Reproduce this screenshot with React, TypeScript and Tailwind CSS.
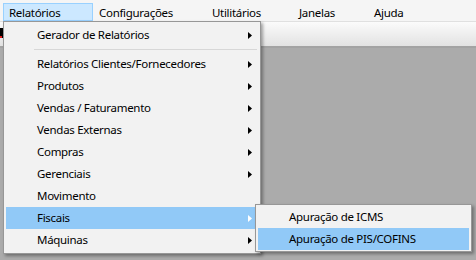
import React from "react";

// Windows-style menu bar with an open "Relatórios" dropdown and "Fiscais" submenu.

const FONT = { fontFamily: '"Noto Sans", "Segoe UI", sans-serif' };

const BAR_ITEMS = [
    { label: "Relatórios", w: "w-[90px]", active: true },
    { label: "Configurações", w: "w-[113px]" },
    { label: "Utilitários", w: "w-[87px]" },
    { label: "Janelas", w: "w-[75px]" },
    { label: "Ajuda", w: "w-[60px]" },
];

type Item = { label: string; sub?: boolean; active?: boolean; sep?: boolean };

const MENU: Item[] = [
    { label: "Gerador de Relatórios", sub: true },
    { label: "", sep: true },
    { label: "Relatórios Clientes/Fornecedores", sub: true },
    { label: "Produtos", sub: true },
    { label: "Vendas / Faturamento", sub: true },
    { label: "Vendas Externas", sub: true },
    { label: "Compras", sub: true },
    { label: "Gerenciais", sub: true },
    { label: "Movimento" },
    { label: "Fiscais", sub: true, active: true },
    { label: "Máquinas", sub: true },
];

const SUBMENU: Item[] = [
    { label: "Apuração de ICMS" },
    { label: "Apuração de PIS/COFINS", active: true },
];

function Arrow({ white }: { white?: boolean }) {
    return (
        <svg width="4" height="7" viewBox="0 0 4 7" className="shrink-0">
            <path d="M0 0 L4 3.5 L0 7 Z" fill={white ? "#ffffff" : "#000000"} />
        </svg>
    );
}

function MenuRow({ item }: { item: Item }) {
    if (item.sep) {
        return (
            <div className="h-[7px] flex items-center pl-[28px] pr-[1px]">
                <div className="h-px w-full bg-[#d7d7d7]" />
            </div>
        );
    }
    return (
        <div
            className={[
                "h-[22px] flex items-center pl-[31px] pr-[6px] text-[11.5px] tracking-[-0.3px] text-black",
                item.active ? "bg-[#91c9f7]" : "",
            ].join(" ")}
        >
            <span className="flex-1 leading-[22px] whitespace-nowrap">{item.label}</span>
            {item.sub && <Arrow white={item.active} />}
        </div>
    );
}

export default function App() {
    return (
        <div className="relative w-[476px] h-[260px] overflow-hidden bg-[#ababab]" style={FONT}>
            {/* Menu bar */}
            <div className="h-[22px] bg-[#f5f5f5] flex items-start pl-[3px] pt-[3px] border-b border-[#e0e0e0]">
                {BAR_ITEMS.map((b) => (
                    <div
                        key={b.label}
                        className={[
                            b.w,
                            "h-[18px] pl-[5px] text-[11.5px] tracking-[-0.3px] leading-[17px] text-black whitespace-nowrap border",
                            b.active ? "bg-[#cce8ff] border-[#99d1ff]" : "border-transparent",
                        ].join(" ")}
                    >
                        {b.label}
                    </div>
                ))}
            </div>

            {/* Toolbar */}
            <div className="h-[26px] bg-gradient-to-b from-[#fbfbfb] to-[#e2e2e2] border-b-2 border-[#a3a3a3] flex items-start">
                <div className="mt-[6px] w-[3px] h-[10px] bg-black flex items-end">
                    <div className="w-[2px] h-[2px] bg-[#e02020]" />
                </div>
            </div>

            {/* Relatórios dropdown */}
            <div className="absolute left-[3px] top-[21px] w-[258px] bg-[#f2f2f2] border border-[#979797] p-[2px] shadow-[2px_2px_3px_rgba(0,0,0,0.35)]">
                {MENU.map((item, i) => (
                    <MenuRow key={i} item={item} />
                ))}
            </div>

            {/* Fiscais submenu */}
            <div className="absolute left-[255px] top-[204px] w-[217px] bg-[#f2f2f2] border border-[#979797] p-[1px] shadow-[2px_2px_3px_rgba(0,0,0,0.35)]">
                <div className="px-[1px]">
                    {SUBMENU.map((item, i) => (
                        <MenuRow key={i} item={item} />
                    ))}
                </div>
            </div>
        </div>
    );
}
